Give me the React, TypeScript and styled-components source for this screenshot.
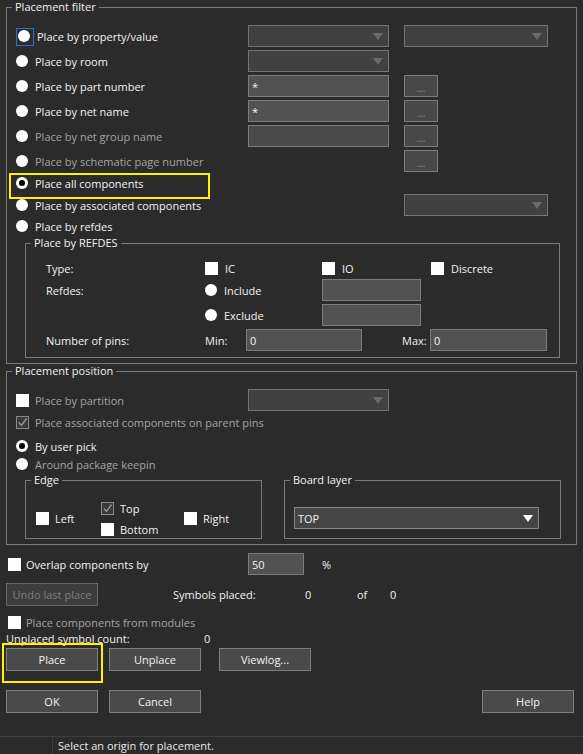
import React from "react"
import styled, { createGlobalStyle } from "styled-components"

const C = {
  bg: "#2b2b2b",
  line: "#7a7a7a",
  text: "#f2f2f2",
  dim: "#a3a3a3",
  input: "#525252",
  inputBorder: "#7c7c7c",
  combo: "#414141",
  button: "#4a4a4a",
  yellow: "#fff200",
}

const Global = createGlobalStyle`
  html, body {
    margin: 0;
    background: ${C.bg};
  }
  #root {
    width: 583px;
    height: 754px;
  }
  * {
    box-sizing: border-box;
  }
`

const S = {
  Dialog: styled.div`
    display: flex;
    flex-direction: column;
    width: 583px;
    height: 754px;
    padding: 0 6px;
    background: ${C.bg};
    color: ${C.text};
    font-family: "Open Sans", "Noto Sans", sans-serif;
    font-size: 11px;
    overflow: hidden;
  `,
  Group: styled.fieldset<{ $width?: number; $ml?: number }>`
    margin: 0 0 0 ${(p) => p.$ml ?? 0}px;
    padding: 0;
    min-width: 0;
    border: 1px solid ${C.line};
    width: ${(p) => (p.$width ? `${p.$width}px` : "auto")};
  `,
  Legend: styled.legend`
    margin-left: 5px;
    padding: 0 3px;
    line-height: 14px;
    color: ${C.text};
  `,
  Body: styled.div<{ $pad: string }>`
    padding: ${(p) => p.$pad};
  `,
  FilterRow: styled.div<{ $h?: number; $mt?: number }>`
    position: relative;
    display: grid;
    grid-template-columns: 232px 156px 144px;
    align-items: center;
    height: ${(p) => p.$h ?? 22}px;
    margin-top: ${(p) => p.$mt ?? 0}px;
  `,
  Option: styled.label<{ $dim?: boolean; $shift?: number; $gap?: number }>`
    position: relative;
    display: flex;
    align-items: center;
    gap: ${(p) => p.$gap ?? 7}px;
    margin-left: ${(p) => p.$shift ?? 0}px;
    color: ${(p) => (p.$dim ? C.dim : C.text)};
    white-space: nowrap;
  `,
  Radio: styled.span<{ $checked?: boolean; $focus?: boolean }>`
    position: relative;
    display: flex;
    align-items: center;
    justify-content: center;
    width: 12px;
    height: 12px;
    border-radius: 50%;
    background: #ffffff;
    flex: none;
    &::before {
      content: "";
      display: ${(p) => (p.$checked ? "block" : "none")};
      width: 6px;
      height: 6px;
      border-radius: 50%;
      background: #000;
    }
    &::after {
      content: "";
      display: ${(p) => (p.$focus ? "block" : "none")};
      position: absolute;
      left: -2px;
      top: -2px;
      width: 16px;
      height: 16px;
      border: 1px solid #1f78d0;
    }
  `,
  Check: styled.span<{ $disabled?: boolean }>`
    display: flex;
    align-items: center;
    justify-content: center;
    width: 13px;
    height: 13px;
    flex: none;
    background: ${(p) => (p.$disabled ? "#3a3a3a" : "#ffffff")};
    border: 1px solid ${(p) => (p.$disabled ? "#8a8a8a" : "#ffffff")};
  `,
  Highlight: styled.span<{ $l: number; $t: number; $w: number; $h: number }>`
    position: absolute;
    left: ${(p) => p.$l}px;
    top: ${(p) => p.$t}px;
    width: ${(p) => p.$w}px;
    height: ${(p) => p.$h}px;
    border: 2px solid ${C.yellow};
    pointer-events: none;
  `,
  Combo: styled.div<{ $width: number; $active?: boolean }>`
    display: flex;
    align-items: center;
    justify-content: space-between;
    width: ${(p) => p.$width}px;
    height: 22px;
    padding: 0 5px 0 3px;
    background: ${(p) => (p.$active ? "#454545" : C.combo)};
    border: 1px solid ${(p) => (p.$active ? "#858585" : "#747474")};
    color: ${C.text};
  `,
  Arrow: styled.span<{ $active?: boolean }>`
    width: 0;
    height: 0;
    border-left: 5px solid transparent;
    border-right: 5px solid transparent;
    border-top: 7px solid ${(p) => (p.$active ? "#ffffff" : "#6b6b6b")};
  `,
  Field: styled.div<{ $width: number; $dis?: boolean }>`
    display: flex;
    align-items: center;
    width: ${(p) => p.$width}px;
    height: 22px;
    padding: 0 3px;
    background: ${(p) => (p.$dis ? "#4a4a4a" : C.input)};
    border: 1px solid ${C.inputBorder};
    color: ${C.text};
  `,
  Dots: styled.div`
    display: flex;
    align-items: flex-end;
    justify-content: center;
    width: 34px;
    height: 22px;
    padding-bottom: 3px;
    background: #484848;
    border: 1px solid ${C.inputBorder};
    color: #8e8e8e;
    line-height: 10px;
  `,
  RefRow: styled.div<{ $mt?: number }>`
    display: grid;
    grid-template-columns: 159px 117px 109px auto;
    align-items: center;
    height: 22px;
    margin-top: ${(p) => p.$mt ?? 0}px;
  `,
  PinsRow: styled.div`
    display: flex;
    align-items: center;
    height: 22px;
    margin-top: 3px;
  `,
  Cell: styled.span<{ $w?: number; $ml?: number }>`
    flex: none;
    width: ${(p) => (p.$w ? `${p.$w}px` : "auto")};
    margin-left: ${(p) => p.$ml ?? 0}px;
    white-space: nowrap;
  `,
  PlainRow: styled.div<{ $h: number; $mt?: number }>`
    display: flex;
    align-items: center;
    height: ${(p) => p.$h}px;
    margin-top: ${(p) => p.$mt ?? 0}px;
  `,
  SubGroups: styled.div`
    display: flex;
    gap: 22px;
    margin-left: 9px;
  `,
  EdgeGrid: styled.div`
    display: grid;
    grid-template-columns: 65px 83px auto;
    grid-template-rows: 18px 18px;
    row-gap: 3px;
    align-items: center;
    padding: 12px 0 0 10px;
  `,
  EdgeCell: styled.div<{ $col: number; $row?: number; $span?: boolean }>`
    grid-column: ${(p) => p.$col};
    grid-row: ${(p) => (p.$span ? "1 / span 2" : p.$row ?? 1)};
  `,
  FooterRow: styled.div<{ $h: number; $mt?: number; $cols?: string }>`
    position: relative;
    display: grid;
    grid-template-columns: ${(p) => p.$cols ?? "auto"};
    align-items: center;
    height: ${(p) => p.$h}px;
    margin-top: ${(p) => p.$mt ?? 0}px;
  `,
  ButtonRow: styled.div<{ $mt: number }>`
    display: flex;
    align-items: center;
    margin-top: ${(p) => p.$mt}px;
  `,
  Button: styled.button<{ $ml?: number; $mr?: number; $disabled?: boolean }>`
    position: relative;
    width: 92px;
    height: 23px;
    margin: 0 ${(p) => p.$mr ?? 0}px 0 ${(p) => p.$ml ?? 0}px;
    padding: 0;
    background: ${(p) => (p.$disabled ? "#3c3c3c" : C.button)};
    border: 1px solid ${(p) => (p.$disabled ? "#666666" : "#7e7e7e")};
    border-radius: 0;
    color: ${(p) => (p.$disabled ? "#7f7f7f" : C.text)};
    font: inherit;
  `,
  Spacer: styled.div`
    flex: 1;
  `,
  Status: styled.div`
    display: flex;
    height: 18px;
    margin: 0 -6px;
    border-top: 1px solid #3e3e3e;
    color: #eaeaea;
  `,
  StatusCell: styled.div`
    width: 53px;
    border-right: 1px solid #3e3e3e;
  `,
  StatusText: styled.div`
    padding-left: 5px;
    line-height: 17px;
  `,
}

const Radio = ({ label, checked, dim, focus, shift }: { label: string; checked?: boolean; dim?: boolean; focus?: boolean; shift?: number }) => (
  <S.Option $dim={dim} $shift={shift}>
    <S.Radio $checked={checked} $focus={focus} />
    {label}
  </S.Option>
)

const Tick = () => (
  <svg width="11" height="11" viewBox="0 0 11 11">
    <polyline points="2,5.5 4.5,8.5 9.5,1.5" fill="none" stroke="#9a9a9a" strokeWidth="1.3" />
  </svg>
)

const Checkbox = ({ label, ticked, dim, gap = 6, shift }: { label: string; ticked?: boolean; dim?: boolean; gap?: number; shift?: number }) => (
  <S.Option $dim={dim} $gap={gap} $shift={shift}>
    <S.Check $disabled={ticked}>{ticked && <Tick />}</S.Check>
    {label}
  </S.Option>
)

const Combo = ({ width, value, active }: { width: number; value?: string; active?: boolean }) => (
  <S.Combo $width={width} $active={active}>
    <span>{value}</span>
    <S.Arrow $active={active} />
  </S.Combo>
)

export default function App() {
  return (
    <>
      <Global />
      <S.Dialog>
        <S.Group>
          <S.Legend>Placement filter</S.Legend>
          <S.Body $pad="11px 0 5px 9px">
            <S.FilterRow>
              <Radio label="Place by property/value" focus shift={2} />
              <Combo width={141} />
              <Combo width={144} />
            </S.FilterRow>
            <S.FilterRow $mt={3}>
              <Radio label="Place by room" />
              <Combo width={141} />
            </S.FilterRow>
            <S.FilterRow $mt={3}>
              <Radio label="Place by part number" />
              <S.Field $width={141}>*</S.Field>
              <S.Dots>...</S.Dots>
            </S.FilterRow>
            <S.FilterRow $mt={3}>
              <Radio label="Place by net name" />
              <S.Field $width={141}>*</S.Field>
              <S.Dots>...</S.Dots>
            </S.FilterRow>
            <S.FilterRow $mt={3}>
              <Radio label="Place by net group name" dim />
              <S.Field $width={141} $dis />
              <S.Dots>...</S.Dots>
            </S.FilterRow>
            <S.FilterRow $mt={3}>
              <Radio label="Place by schematic page number" dim />
              <span />
              <S.Dots>...</S.Dots>
            </S.FilterRow>
            <S.FilterRow>
              <S.Option>
                <S.Radio $checked />
                Place all components
                <S.Highlight $l={-7} $t={-3} $w={201} $h={26} />
              </S.Option>
            </S.FilterRow>
            <S.FilterRow>
              <Radio label="Place by associated components" />
              <span />
              <Combo width={144} />
            </S.FilterRow>
            <S.FilterRow $h={20}>
              <Radio label="Place by refdes" />
            </S.FilterRow>

            <S.Group $width={535} $ml={9}>
              <S.Legend>Place by REFDES</S.Legend>
              <S.Body $pad="7px 0 6px 20px">
                <S.RefRow>
                  <span>Type:</span>
                  <Checkbox label="IC" gap={7} />
                  <Checkbox label="IO" gap={7} />
                  <Checkbox label="Discrete" gap={7} />
                </S.RefRow>
                <S.RefRow>
                  <span>Refdes:</span>
                  <Radio label="Include" />
                  <S.Field $width={99} />
                </S.RefRow>
                <S.RefRow $mt={3}>
                  <span />
                  <Radio label="Exclude" />
                  <S.Field $width={99} />
                </S.RefRow>
                <S.PinsRow>
                  <S.Cell $w={159}>Number of pins:</S.Cell>
                  <S.Cell $w={41}>Min:</S.Cell>
                  <S.Field $width={116}>0</S.Field>
                  <S.Cell $w={28} $ml={40}>Max:</S.Cell>
                  <S.Field $width={117}>0</S.Field>
                </S.PinsRow>
              </S.Body>
            </S.Group>
          </S.Body>
        </S.Group>

        <S.Group>
          <S.Legend>Placement position</S.Legend>
          <S.Body $pad="11px 0 5px 9px">
            <S.FilterRow>
              <Checkbox label="Place by partition" dim />
              <Combo width={141} />
            </S.FilterRow>
            <S.PlainRow $h={22}>
              <Checkbox label="Place associated components on parent pins" ticked dim />
            </S.PlainRow>
            <S.PlainRow $h={18} $mt={4}>
              <Radio label="By user pick" checked />
            </S.PlainRow>
            <S.PlainRow $h={18}>
              <Radio label="Around package keepin" dim />
            </S.PlainRow>

            <S.SubGroups>
              <S.Group $width={237}>
                <S.Legend>Edge</S.Legend>
                <S.EdgeGrid>
                  <S.EdgeCell $col={1} $span>
                    <Checkbox label="Left" />
                  </S.EdgeCell>
                  <S.EdgeCell $col={2} $row={1}>
                    <Checkbox label="Top" ticked />
                  </S.EdgeCell>
                  <S.EdgeCell $col={2} $row={2}>
                    <Checkbox label="Bottom" />
                  </S.EdgeCell>
                  <S.EdgeCell $col={3} $span>
                    <Checkbox label="Right" />
                  </S.EdgeCell>
                </S.EdgeGrid>
              </S.Group>
              <S.Group $width={277}>
                <S.Legend>Board layer</S.Legend>
                <S.Body $pad="20px 0 9px 9px">
                  <Combo width={245} value="TOP" active />
                </S.Body>
              </S.Group>
            </S.SubGroups>
          </S.Body>
        </S.Group>

        <S.FooterRow $h={22} $mt={8} $cols="242px 56px auto">
          <Checkbox label="Overlap components by" gap={5} shift={2} />
          <S.Field $width={56}>50</S.Field>
          <S.Cell $ml={18}>%</S.Cell>
        </S.FooterRow>

        <S.FooterRow $h={23} $mt={8} $cols="167px 132px 52px 33px auto">
          <S.Button $disabled>Undo last place</S.Button>
          <span>Symbols placed:</span>
          <span>0</span>
          <span>of</span>
          <span>0</span>
        </S.FooterRow>

        <S.FooterRow $h={18} $mt={7}>
          <Checkbox label="Place components from modules" gap={5} shift={2} dim />
        </S.FooterRow>

        <S.FooterRow $h={14} $cols="198px auto">
          <span>Unplaced symbol count:</span>
          <span>0</span>
        </S.FooterRow>

        <S.ButtonRow $mt={3}>
          <S.Button>
            Place
            <S.Highlight $l={-5} $t={-6} $w={101} $h={40} />
          </S.Button>
          <S.Button $ml={11}>Unplace</S.Button>
          <S.Button $ml={18}>Viewlog...</S.Button>
        </S.ButtonRow>

        <S.ButtonRow $mt={19}>
          <S.Button>OK</S.Button>
          <S.Button $ml={11}>Cancel</S.Button>
          <S.Spacer />
          <S.Button $mr={3}>Help</S.Button>
        </S.ButtonRow>

        <S.Spacer />
        <S.Status>
          <S.StatusCell />
          <S.StatusText>Select an origin for placement.</S.StatusText>
        </S.Status>
      </S.Dialog>
    </>
  )
}
